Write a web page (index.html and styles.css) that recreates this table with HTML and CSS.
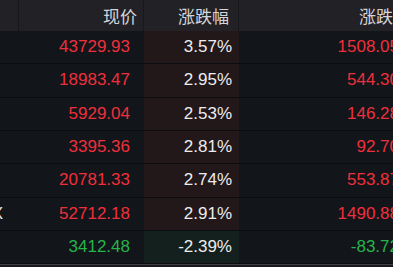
FILE: index.html
```html
<!DOCTYPE html>
<html lang="zh-CN">
<head>
<meta charset="utf-8">
<title>行情</title>
<link rel="stylesheet" href="styles.css">
</head>
<body>
<div class="table">
  <div class="row head">
    <div class="cell name"></div>
    <div class="cell price">现价</div>
    <div class="cell pct">涨跌幅</div>
    <div class="cell chg">涨跌额</div>
  </div>
  <div class="row up">
    <div class="cell name"></div>
    <div class="cell price">43729.93</div>
    <div class="cell pct">3.57%</div>
    <div class="cell chg">1508.05</div>
  </div>
  <div class="row up">
    <div class="cell name"></div>
    <div class="cell price">18983.47</div>
    <div class="cell pct">2.95%</div>
    <div class="cell chg">544.30</div>
  </div>
  <div class="row up">
    <div class="cell name"></div>
    <div class="cell price">5929.04</div>
    <div class="cell pct">2.53%</div>
    <div class="cell chg">146.28</div>
  </div>
  <div class="row up">
    <div class="cell name"></div>
    <div class="cell price">3395.36</div>
    <div class="cell pct">2.81%</div>
    <div class="cell chg">92.70</div>
  </div>
  <div class="row up">
    <div class="cell name"></div>
    <div class="cell price">20781.33</div>
    <div class="cell pct">2.74%</div>
    <div class="cell chg">553.87</div>
  </div>
  <div class="row up">
    <div class="cell name">SENSEX</div>
    <div class="cell price">52712.18</div>
    <div class="cell pct">2.91%</div>
    <div class="cell chg">1490.88</div>
  </div>
  <div class="row down">
    <div class="cell name"></div>
    <div class="cell price">3412.48</div>
    <div class="cell pct">-2.39%</div>
    <div class="cell chg">-83.72</div>
  </div>
</div>
</body>
</html>
```
FILE: styles.css
```css
html, body {
  margin: 0;
  padding: 0;
  background: #19191d;
  overflow: hidden;
}
body {
  width: 393px;
  height: 267px;
  font-family: "Liberation Sans", Arial, "Noto Sans CJK SC", sans-serif;
}
.table {
  width: 420px;
  background: #121519;
  border-bottom: 1px solid #3e3e44;
}
.row {
  display: grid;
  grid-template-columns: 19px 125px 95px 181px;
  box-sizing: border-box;
  height: 33.333px;
  border-bottom: 1px solid #0b0d10;
}
.cell {
  box-sizing: border-box;
  display: flex;
  align-items: center;
  justify-content: flex-end;
  white-space: nowrap;
  overflow: hidden;
  font-size: 17px;
}
.head {
  height: 31px;
  border-bottom: none;
  background: #212126;
}
.head .cell {
  font-family: "Noto Sans CJK SC", "Liberation Sans", sans-serif;
  font-size: 17px;
  color: #d4d4d8;
  border-right: 1px solid #18181c;
}
.head .price { padding-right: 6px; }
.head .pct { padding-right: 9px; }
.head .chg { padding-right: 10px; border-right: none; }
.name {
  color: #e8e8ea;
  padding-right: 16px;
}
.price { padding-right: 14px; }
.pct { padding-right: 7px; color: #ececee; }
.chg { padding-right: 21px; }
.up .price, .up .chg { color: #ef2f3c; }
.down .price, .down .chg { color: #25b44c; }
.up .pct { background: #221719; }
.down .pct { background: #14201d; }
```
